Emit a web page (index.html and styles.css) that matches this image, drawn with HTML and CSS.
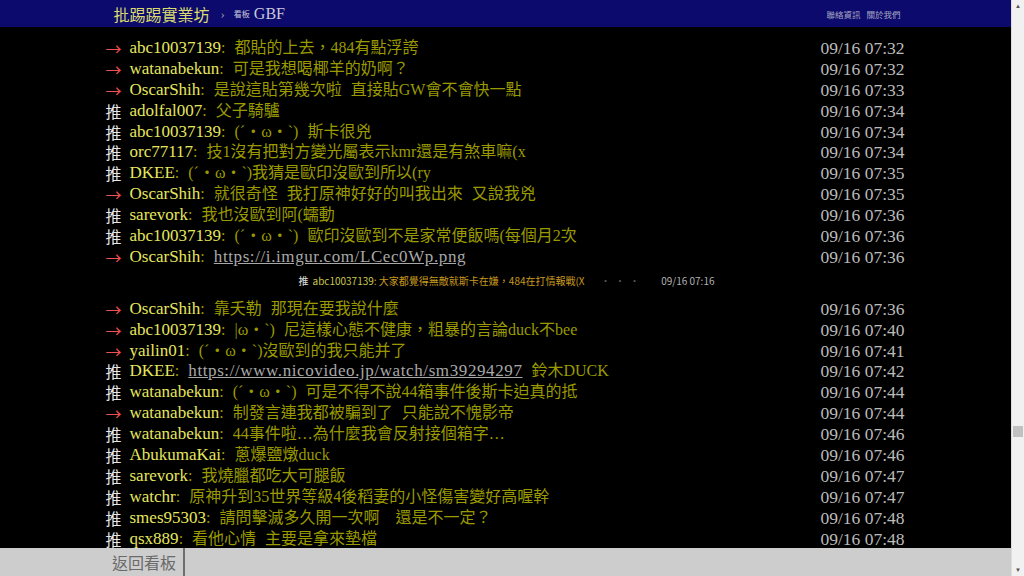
FILE: index.html
```html
<!DOCTYPE html>
<html lang="zh-Hant">
<head>
    <meta charset="UTF-8">
    <meta name="viewport" content="width=device-width, initial-scale=1.0">
    <title>[閒聊] GBF - 看板 GBF - 批踢踢實業坊</title>
    <link rel="stylesheet" href="styles.css">
</head>
<body>

    <div class="window">
        <div class="page">

            <!-- 上方標題列 -->
            <div class="topbar">
                <div class="container topbar-inner">
                    <a class="logo" href="#">批踢踢實業坊</a>
                    <span class="sep">›</span>
                    <a class="board" href="#"><span class="board-label">看板</span> GBF</a>
                    <div class="right-links">
                        <a href="#">聯絡資訊</a>
                        <a href="#">關於我們</a>
                    </div>
                </div>
            </div>

            <!-- 推文 -->
            <div class="main">
                <div class="container pushes">
                    <div class="push"><span class="push-tag arrow">→</span><span class="push-userid">abc10037139</span><span class="push-content">: 都貼的上去，484有點浮誇</span><span class="push-time">09/16 07:32</span></div>
                    <div class="push"><span class="push-tag arrow">→</span><span class="push-userid">watanabekun</span><span class="push-content">: 可是我想喝椰羊的奶啊？</span><span class="push-time">09/16 07:32</span></div>
                    <div class="push"><span class="push-tag arrow">→</span><span class="push-userid">OscarShih</span><span class="push-content">: 是說這貼第幾次啦 直接貼GW會不會快一點</span><span class="push-time">09/16 07:33</span></div>
                    <div class="push"><span class="push-tag">推</span><span class="push-userid">adolfal007</span><span class="push-content">: 父子騎驢</span><span class="push-time">09/16 07:34</span></div>
                    <div class="push"><span class="push-tag">推</span><span class="push-userid">abc10037139</span><span class="push-content">: (´・ω・`) 斯卡很兇</span><span class="push-time">09/16 07:34</span></div>
                    <div class="push"><span class="push-tag">推</span><span class="push-userid">orc77117</span><span class="push-content">: 技1沒有把對方變光屬表示kmr還是有煞車嘛(x</span><span class="push-time">09/16 07:34</span></div>
                    <div class="push"><span class="push-tag">推</span><span class="push-userid">DKEE</span><span class="push-content">: (´・ω・`)我猜是歐印沒歐到所以(ry</span><span class="push-time">09/16 07:35</span></div>
                    <div class="push"><span class="push-tag arrow">→</span><span class="push-userid">OscarShih</span><span class="push-content">: 就很奇怪 我打原神好好的叫我出來 又說我兇</span><span class="push-time">09/16 07:35</span></div>
                    <div class="push"><span class="push-tag">推</span><span class="push-userid">sarevork</span><span class="push-content">: 我也沒歐到阿(蠕動</span><span class="push-time">09/16 07:36</span></div>
                    <div class="push"><span class="push-tag">推</span><span class="push-userid">abc10037139</span><span class="push-content">: (´・ω・`) 歐印沒歐到不是家常便飯嗎(每個月2次</span><span class="push-time">09/16 07:36</span></div>
                    <div class="push"><span class="push-tag arrow">→</span><span class="push-userid">OscarShih</span><span class="push-content">: <a href="#">https://i.imgur.com/LCec0Wp.png</a></span><span class="push-time">09/16 07:36</span></div>

                    <!-- 圖片預覽 -->
                    <div class="richcontent">
                        <div class="shot">
                            <span class="shot-tag">推</span>
                            <span class="shot-id">abc10037139</span><span class="shot-text">: 大家都覺得無敵就斯卡在嫌，484在打情報戰(X</span>
                            <span class="shot-dots">·  ·  ·</span>
                            <span class="shot-time">09/16 07:16</span>
                        </div>
                    </div>

                    <div class="push"><span class="push-tag arrow">→</span><span class="push-userid">OscarShih</span><span class="push-content">: 靠夭勒 那現在要我說什麼</span><span class="push-time">09/16 07:36</span></div>
                    <div class="push"><span class="push-tag arrow">→</span><span class="push-userid">abc10037139</span><span class="push-content">: |ω・`) 尼這樣心態不健康，粗暴的言論duck不bee</span><span class="push-time">09/16 07:40</span></div>
                    <div class="push"><span class="push-tag arrow">→</span><span class="push-userid">yailin01</span><span class="push-content">: (´・ω・`)沒歐到的我只能并了</span><span class="push-time">09/16 07:41</span></div>
                    <div class="push"><span class="push-tag">推</span><span class="push-userid">DKEE</span><span class="push-content">: <a href="#">https://www.nicovideo.jp/watch/sm39294297</a> 鈴木DUCK</span><span class="push-time">09/16 07:42</span></div>
                    <div class="push"><span class="push-tag">推</span><span class="push-userid">watanabekun</span><span class="push-content">: (´・ω・`) 可是不得不說44箱事件後斯卡迫真的抵</span><span class="push-time">09/16 07:44</span></div>
                    <div class="push"><span class="push-tag arrow">→</span><span class="push-userid">watanabekun</span><span class="push-content">: 制發言連我都被騙到了 只能說不愧影帝</span><span class="push-time">09/16 07:44</span></div>
                    <div class="push"><span class="push-tag">推</span><span class="push-userid">watanabekun</span><span class="push-content">: 44事件啦…為什麼我會反射接個箱字…</span><span class="push-time">09/16 07:46</span></div>
                    <div class="push"><span class="push-tag">推</span><span class="push-userid">AbukumaKai</span><span class="push-content">: 蔥爆鹽燉duck</span><span class="push-time">09/16 07:46</span></div>
                    <div class="push"><span class="push-tag">推</span><span class="push-userid">sarevork</span><span class="push-content">: 我燒臘都吃大可腿飯</span><span class="push-time">09/16 07:47</span></div>
                    <div class="push"><span class="push-tag">推</span><span class="push-userid">watchr</span><span class="push-content">: 原神升到35世界等級4後稻妻的小怪傷害變好高喔幹</span><span class="push-time">09/16 07:47</span></div>
                    <div class="push"><span class="push-tag">推</span><span class="push-userid">smes95303</span><span class="push-content">: 請問擊滅多久開一次啊　還是不一定？</span><span class="push-time">09/16 07:48</span></div>
                    <div class="push"><span class="push-tag">推</span><span class="push-userid">qsx889</span><span class="push-content">: 看他心情 主要是拿來墊檔</span><span class="push-time">09/16 07:48</span></div>
                </div>
            </div>

            <!-- 下方導覽列 -->
            <div class="navbar">
                <a class="back" href="#">返回看板</a>
            </div>
        </div>

        <!-- 捲軸 -->
        <div class="scrollbar">
            <div class="scroll-btn">▲</div>
            <div class="scroll-track">
                <div class="scroll-thumb"></div>
            </div>
            <div class="scroll-btn">▼</div>
        </div>
    </div>

</body>
</html>
```

FILE: styles.css
```css
body {
    margin: 0;
    padding: 0;
    background-color: #000;
    font-family: 'Liberation Serif', 'Noto Sans CJK TC', serif;
    overflow: hidden;
}

a {
    text-decoration: none;
}

.window {
    display: flex;
    width: 1024px;
    height: 576px;
}

.page {
    flex: 1;
    display: flex;
    flex-direction: column;
    min-width: 0;
}

.container {
    width: 800px;
    margin: 0 auto;
    box-sizing: border-box;
}

/* 上方標題列 */
.topbar {
    height: 27px;
    background-color: #0c0a6c;
    flex-shrink: 0;
}

.topbar-inner {
    display: flex;
    align-items: center;
    height: 100%;
    padding: 0 5px 0 8px;
}

.logo {
    color: #dada6e;
    font-family: 'Noto Sans CJK TC', serif;
    font-size: 16px;
    line-height: 1;
}

.sep {
    color: #9a9ab8;
    font-size: 13px;
    margin: 0 9px 0 11px;
}

.board {
    color: #c8c8dc;
    font-size: 16px;
}

.board-label {
    font-family: 'Noto Sans CJK TC', sans-serif;
    font-size: 8px;
    vertical-align: 2px;
}

.right-links {
    margin-left: auto;
    display: flex;
    gap: 6px;
}

.right-links a {
    color: #a8a8c4;
    font-family: 'Noto Sans CJK TC', sans-serif;
    font-size: 8.5px;
}

/* 推文 */
.main {
    flex: 1;
    overflow: hidden;
}

.pushes {
    padding-top: 11px;
}

.push {
    display: flex;
    height: 20.9px;
    line-height: 20.9px;
    font-size: 17px;
    white-space: pre;
}

.push-tag {
    width: 24px;
    flex-shrink: 0;
    color: #e8e8e8;
    font-family: 'Noto Sans CJK TC', sans-serif;
    font-size: 16px;
}

.push-tag.arrow {
    color: #f05050;
}

.push-userid {
    color: #e6e65e;
}

.push-content {
    color: #9a9a00;
    font-size: 16px;
    word-spacing: 5px;
}

.push-content a {
    color: #a8a8a8;
    font-size: 17px;
    letter-spacing: 0.6px;
    text-decoration: underline;
}

.push-time {
    margin-left: auto;
    color: #bbb;
    font-size: 17.5px;
    padding-right: 1px;
}

/* 圖片預覽 */
.richcontent {
    height: 31px;
    display: flex;
    align-items: center;
    justify-content: center;
    padding-left: 2px;
}

.shot {
    width: 416px;
    font-family: 'Noto Sans CJK TC', sans-serif;
    font-size: 10px;
    line-height: 14px;
    white-space: pre;
    display: flex;
    margin-top: -4px;
}

.shot-tag {
    color: #e0e0e0;
    margin-right: 4px;
}

.shot-id {
    color: #c8c850;
}

.shot-text {
    color: #c89a1e;
}

.shot-dots {
    color: #555;
    margin-left: 16px;
}

.shot-time {
    margin-left: auto;
    color: #b0b0b0;
}

/* 下方導覽列 */
.navbar {
    height: 28px;
    flex-shrink: 0;
    background-color: #cdcdcd;
    display: flex;
}

.back {
    width: 185px;
    box-sizing: border-box;
    border-right: 2px solid #6e6e6e;
    text-align: right;
    padding-right: 7px;
    color: #6a6a6a;
    font-family: 'Noto Sans CJK TC', sans-serif;
    font-size: 16px;
    line-height: 28px;
}

/* 捲軸 */
.scrollbar {
    width: 12px;
    background-color: #f1f1f1;
    border-left: 1px solid #dcdcdc;
    display: flex;
    flex-direction: column;
}

.scroll-btn {
    height: 12px;
    font-size: 6px;
    line-height: 12px;
    text-align: center;
    color: #505050;
}

.scroll-track {
    flex: 1;
    position: relative;
}

.scroll-thumb {
    position: absolute;
    left: 1px;
    right: 1px;
    top: 414px;
    height: 11px;
    background-color: #c1c1c1;
}
```
